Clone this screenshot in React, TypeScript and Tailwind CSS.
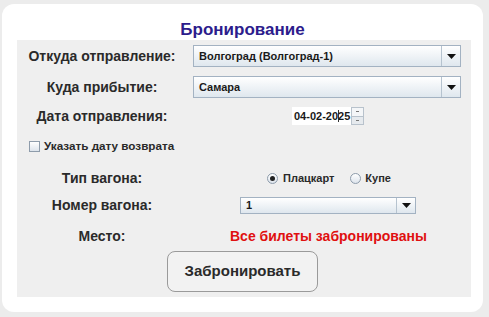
const labelCls =
  'w-[170px] shrink-0 text-center text-[14px] font-bold text-[#2a2a2a]'

function Arrow() {
  return (
    <svg width="9" height="5" viewBox="0 0 9 5">
      <path d="M0 0h9L4.5 5z" fill="#111" />
    </svg>
  )
}

function Combo({ value, className }: { value: string; className: string }) {
  return (
    <div
      className={`flex items-stretch border border-[#a3b2c2] bg-gradient-to-b from-white to-[#dfe7ee] ${className}`}
    >
      <div className="flex flex-1 items-center pl-[5px] text-[11px] font-bold text-[#1a1a1a]">
        {value}
      </div>
      <div className="flex w-[19px] items-center justify-center border-l border-[#b6c3cf]">
        <Arrow />
      </div>
    </div>
  )
}

export default function App() {
  return (
    <div
      className="h-[317px] w-[489px] bg-[#ececec] pl-[2px] pt-[4px]"
      style={{ fontFamily: '"Liberation Sans", Arial, sans-serif' }}
    >
      <div className="flex h-[308px] w-[481px] flex-col rounded-[12px] bg-white">
        <h1 className="mt-[15px] h-[21px] text-center text-[17px] leading-[21px] font-bold text-[#2c1c8c]">
          Бронирование
        </h1>
        <div className="ml-[15px] flex h-[257px] w-[454px] flex-col bg-[#efefef] pt-[5px]">
          <div className="flex h-[22px] items-center">
            <div className={labelCls}>Откуда отправление:</div>
            <Combo value="Волгоград (Волгоград-1)" className="ml-[6px] h-[22px] w-[268px]" />
          </div>
          <div className="mt-[9px] flex h-[22px] items-center">
            <div className={labelCls}>Куда прибытие:</div>
            <Combo value="Самара" className="ml-[6px] h-[22px] w-[268px]" />
          </div>
          <div className="mt-[6px] flex h-[24px] items-center">
            <div className={labelCls}>Дата отправления:</div>
            <div className="ml-[105px] flex h-[18px] items-stretch">
              <div className="flex w-[59px] items-center overflow-hidden whitespace-nowrap bg-white pl-[2px] text-[11px] font-bold text-[#1a1a1a]">
                04-02-20
                <span className="-mr-px inline-block h-[12px] w-px bg-[#333]" />
                25
              </div>
              <div className="flex w-[13px] flex-col border border-[#b8c2cc]">
                <div className="flex flex-1 items-center justify-center border-b border-[#b8c2cc] bg-[#f4f6f8]">
                  <span className="h-px w-[3px] bg-[#777]" />
                </div>
                <div className="flex flex-1 items-center justify-center bg-[#e6eaee]">
                  <span className="h-px w-[3px] bg-[#777]" />
                </div>
              </div>
            </div>
          </div>
          <div className="mt-[8px] flex h-[20px] items-center pl-[12px]">
            <span className="h-[11px] w-[11px] border border-[#8e9cab] bg-gradient-to-b from-white to-[#dde4ec]" />
            <span className="ml-[4px] text-[11.7px] font-bold text-[#2a2a2a]">
              Указать дату возврата
            </span>
          </div>
          <div className="mt-[10px] flex h-[24px] items-center">
            <div className={labelCls}>Тип вагона:</div>
            <div className="ml-[80px] flex items-center">
              <span className="flex h-[11px] w-[11px] items-center justify-center rounded-full border border-[#8e9cab] bg-gradient-to-b from-white to-[#dde4ec]">
                <span className="h-[5px] w-[5px] rounded-full bg-[#222]" />
              </span>
              <span className="ml-[5px] text-[11px] font-bold text-[#2a2a2a]">Плацкарт</span>
              <span className="ml-[16px] h-[11px] w-[11px] rounded-full border border-[#8e9cab] bg-gradient-to-b from-white to-[#dde4ec]" />
              <span className="ml-[4px] text-[11px] font-bold text-[#2a2a2a]">Купе</span>
            </div>
          </div>
          <div className="mt-[5px] flex h-[20px] items-center">
            <div className={labelCls}>Номер вагона:</div>
            <Combo value="1" className="ml-[53px] h-[17px] w-[176px]" />
          </div>
          <div className="mt-[11px] flex h-[20px] items-center">
            <div className={labelCls}>Место:</div>
            <div className="ml-[43px] text-[14px] font-bold text-[#e01010]">
              Все билеты забронированы
            </div>
          </div>
          <div className="mt-[5px] flex">
            <button
              type="button"
              className="ml-[150px] h-[41px] w-[151px] rounded-[8px] border border-[#9a9a9a] bg-[#f2f2f2] text-[15px] font-bold text-[#2a2a2a]"
            >
              Забронировать
            </button>
          </div>
        </div>
      </div>
    </div>
  )
}
